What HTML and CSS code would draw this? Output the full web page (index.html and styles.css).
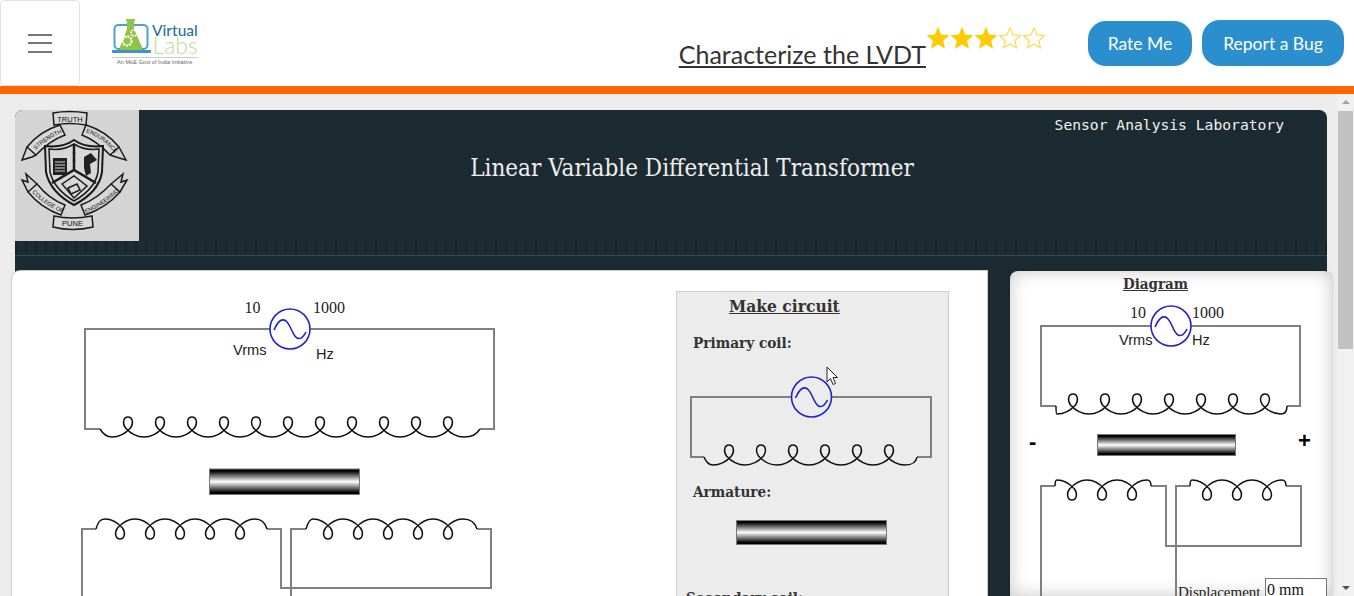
FILE: index.html
```html
<!DOCTYPE html>
<html lang="en">
<head>
    <meta charset="UTF-8">
    <meta name="viewport" content="width=device-width, initial-scale=1.0">
    <title>Characterize the LVDT</title>
    <link rel="stylesheet" href="styles.css">
</head>
<body>
    <!-- Shared shapes for the circuit drawings -->
    <svg class="defs" aria-hidden="true">
        <defs>
            <path id="loopUp" d="M0,0 C8,0 14,-4 18.5,-9 C22,-14 20.5,-20 16,-20 C11.5,-20 10,-14 13.5,-9 C18,-4 24,0 32,0"/>
            <path id="loopDown" d="M0,0 C7,0 13,4 17.5,9 C21,14 19.5,20 15,20 C10.5,20 9,14 12.5,9 C17,4 23,0 30,0"/>
            <g id="source">
                <circle cx="0" cy="0" r="20"/>
                <path d="M-16,1 C-12,-8 -8,-11 -4,-8 C1,-4 2,6 7,9 C11,11 14,7 16,3"/>
            </g>
            <linearGradient id="barFill" x1="0" y1="0" x2="0" y2="1">
                <stop offset="0" stop-color="#000"/>
                <stop offset="0.08" stop-color="#000"/>
                <stop offset="0.5" stop-color="#fff"/>
                <stop offset="0.92" stop-color="#000"/>
                <stop offset="1" stop-color="#000"/>
            </linearGradient>
            <!-- Baselines for the lettering on the crest ribbons -->
            <path id="arcStrength" d="M18,43 Q31,28 52,21"/>
            <path id="arcEndurance" d="M66,21 Q86,25 102,46"/>
            <path id="arcCollege" d="M15,80 Q28,95 50,104"/>
            <path id="arcEngineering" d="M66,105 Q88,98 108,77"/>
        </defs>
    </svg>

    <!-- Top bar -->
    <header class="topbar">
        <button class="menu-btn" aria-label="Menu">
            <span></span>
            <span></span>
            <span></span>
        </button>

        <svg class="logo" viewBox="112 18 86 48" role="img" aria-label="Virtual Labs">
            <rect x="114.5" y="25" width="33" height="24" rx="4" fill="none" stroke="#4ba3d3" stroke-width="2"/>
            <path d="M112,50 H151 V52 Q151,53 150,53 H113 Q112,53 112,52 Z" fill="#3d95c8"/>
            <path d="M126,19 H135 V21 H134 V29 L142,47 Q143,50 141,50 H121 Q119,50 120,47 L127,29 V21 H126 Z" fill="#8fc444"/>
            <circle cx="127" cy="41" r="4.5" fill="none" stroke="#fff" stroke-width="2.4" stroke-dasharray="2 1"/>
            <circle cx="134" cy="33" r="3" fill="none" stroke="#fff" stroke-width="1.8" stroke-dasharray="1.5 .8"/>
            <text class="logo-virtual" x="152" y="36">Virtual</text>
            <text class="logo-labs" x="152.5" y="54">Labs</text>
            <line x1="112" y1="57.5" x2="198" y2="57.5" stroke="#ccc"/>
            <text class="logo-tag" x="117" y="64">An MoE Govt of India Initiative</text>
        </svg>

        <div class="top-right">
            <h1 class="exp-title">Characterize the LVDT</h1>
            <div class="stars">
                <svg viewBox="0 0 24 24"><path class="star-on" d="M12,1 L15.2,8.6 L23.4,9.3 L17.2,14.7 L19.1,22.8 L12,18.5 L4.9,22.8 L6.8,14.7 L.6,9.3 L8.8,8.6 Z"/></svg>
                <svg viewBox="0 0 24 24"><path class="star-on" d="M12,1 L15.2,8.6 L23.4,9.3 L17.2,14.7 L19.1,22.8 L12,18.5 L4.9,22.8 L6.8,14.7 L.6,9.3 L8.8,8.6 Z"/></svg>
                <svg viewBox="0 0 24 24"><path class="star-on" d="M12,1 L15.2,8.6 L23.4,9.3 L17.2,14.7 L19.1,22.8 L12,18.5 L4.9,22.8 L6.8,14.7 L.6,9.3 L8.8,8.6 Z"/></svg>
                <svg viewBox="0 0 24 24"><path class="star-off" d="M12,2 L15,8.9 L22.4,9.6 L16.8,14.5 L18.5,21.8 L12,18 L5.5,21.8 L7.2,14.5 L1.6,9.6 L9,8.9 Z"/></svg>
                <svg viewBox="0 0 24 24"><path class="star-off" d="M12,2 L15,8.9 L22.4,9.6 L16.8,14.5 L18.5,21.8 L12,18 L5.5,21.8 L7.2,14.5 L1.6,9.6 L9,8.9 Z"/></svg>
            </div>
            <div class="top-buttons">
                <button class="pill-btn pill-rate">Rate Me</button>
                <button class="pill-btn pill-bug">Report a Bug</button>
            </div>
        </div>
    </header>

    <div class="page">
        <main class="content">
            <section class="sheet">
                <div class="sheet-head">
                    <!-- College crest -->
                    <div class="crest">
                        <svg viewBox="0 0 124 131" role="img" aria-label="College of Engineering Pune crest">
                            <g class="crest-lines">
                                <path d="M12,37 L7,50 L17,47 L21,45 M104,37 L111,50 L101,47 L95,45"/>
                                <path d="M13,82 L7,70 L13,72 L11,64 L22,74 M105,82 L112,70 L106,72 L108,64 L96,74"/>
                                <path class="banner" d="M38,3 Q54,0 72,3 L71,15 Q54,12 39,15 Z"/>
                                <path class="banner" d="M12,37 Q25,21 45,15 L50,25 Q34,31 21,45 Z"/>
                                <path class="banner" d="M71,15 Q91,21 104,37 L95,45 Q82,31 67,25 Z"/>
                                <path class="banner" d="M13,82 Q26,98 46,105 L50,95 Q34,89 22,74 Z"/>
                                <path class="banner" d="M105,82 Q91,98 70,105 L66,95 Q82,89 96,74 Z"/>
                                <path class="banner" d="M39,106 Q57,110 77,106 L78,117 Q57,122 38,117 Z"/>
                                <path class="shield" d="M30,36 Q48,38 59,30 Q70,38 88,36 L87,62 Q84,82 59,95 Q35,82 31,62 Z"/>
                                <path d="M34,39 Q48,41 59,34 Q70,41 84,39 L83,62 Q80,79 59,91 Q39,79 35,62 Z"/>
                                <path class="chevron" d="M59,34 V60 M37,73 L59,60 L81,73"/>
                                <path d="M47,74 L59,66 L72,76 L59,88 Z"/>
                                <path d="M53,78 L62,74 L65,80 L56,84 Z"/>
                            </g>
                            <rect x="38" y="48" width="14" height="17" fill="#222"/>
                            <path d="M40,52 H50 M40,55 H50 M40,58 H50 M40,61 H50" stroke="#d4d4d4"/>
                            <path d="M69,47 L76,43 L82,50 L75,54 L76,63 L71,66 L69,58 Z" fill="#222"/>
                            <circle cx="59" cy="43" r="1.4" fill="#222"/>
                            <circle cx="59" cy="51" r="1.4" fill="#222"/>
                            <text class="crest-text" x="55" y="11.5" text-anchor="middle">TRUTH</text>
                            <text class="crest-small"><textPath href="#arcStrength" startOffset="4">STRENGTH</textPath></text>
                            <text class="crest-small"><textPath href="#arcEndurance" startOffset="5">ENDURANCE</textPath></text>
                            <text class="crest-small"><textPath href="#arcCollege" startOffset="3">COLLEGE OF</textPath></text>
                            <text class="crest-small"><textPath href="#arcEngineering" startOffset="5">ENGINEERING</textPath></text>
                            <text class="crest-text" x="57.5" y="116" text-anchor="middle">PUNE</text>
                        </svg>
                    </div>
                    <div class="sheet-titles">
                        <div class="lab-name">Sensor Analysis Laboratory</div>
                        <h2 class="sim-title">Linear Variable Differential Transformer</h2>
                    </div>
                </div>
                <div class="sheet-strip"></div>

                <div class="panels">
                    <!-- Main work area -->
                    <div class="panel-main">
                        <svg class="work-svg" viewBox="12 271 664 325">
                            <text class="val" x="244.5" y="313">10</text>
                            <text class="val" x="313" y="313">1000</text>
                            <path class="wire" d="M100,429 H85 V329 H494 V429 H480"/>
                            <use class="src" href="#source" x="290" y="329"/>
                            <text class="unit" x="233" y="355">Vrms</text>
                            <text class="unit" x="316" y="359">Hz</text>
                            <g class="coil">
                                <path d="M100,429 C103,434 107,437 112,437"/>
                                <use href="#loopUp" x="112" y="437"/>
                                <use href="#loopUp" x="144" y="437"/>
                                <use href="#loopUp" x="176" y="437"/>
                                <use href="#loopUp" x="208" y="437"/>
                                <use href="#loopUp" x="240" y="437"/>
                                <use href="#loopUp" x="272" y="437"/>
                                <use href="#loopUp" x="304" y="437"/>
                                <use href="#loopUp" x="336" y="437"/>
                                <use href="#loopUp" x="368" y="437"/>
                                <use href="#loopUp" x="400" y="437"/>
                                <use href="#loopUp" x="432" y="437"/>
                                <path d="M464,437 C472,437 476,435 480,429"/>
                            </g>
                            <rect class="bar" x="209.5" y="469" width="150" height="25.5"/>
                            <path class="wire" d="M82,596 V529 H96 M267,529 H281 V588 H491 V529 H477 M306,529 H291 V596"/>
                            <g class="coil">
                                <path d="M96,529 C98,522 100,519 105,519"/>
                                <use href="#loopDown" x="105" y="519"/>
                                <use href="#loopDown" x="135" y="519"/>
                                <use href="#loopDown" x="165" y="519"/>
                                <use href="#loopDown" x="195" y="519"/>
                                <use href="#loopDown" x="225" y="519"/>
                                <path d="M255,519 C261,519 265,522 267,529"/>
                                <path d="M306,529 C308,522 310,519 313,519"/>
                                <use href="#loopDown" x="313" y="519"/>
                                <use href="#loopDown" x="343" y="519"/>
                                <use href="#loopDown" x="373" y="519"/>
                                <use href="#loopDown" x="403" y="519"/>
                                <use href="#loopDown" x="433" y="519"/>
                                <path d="M463,519 C471,519 475,522 477,529"/>
                            </g>
                        </svg>

                        <aside class="make-box">
                            <h3 class="make-title">Make circuit</h3>
                            <h4 class="make-label make-pri">Primary coil:</h4>
                            <svg class="make-svg" viewBox="677 368 271 104">
                                <path class="wire" d="M704,457 H691 V397 H931 V457 H917"/>
                                <use class="src" href="#source" x="811.5" y="397"/>
                                <g class="coil">
                                    <path d="M704,457 C706,462 709,465 713,465"/>
                                    <use href="#loopUp" x="713" y="465"/>
                                    <use href="#loopUp" x="745" y="465"/>
                                    <use href="#loopUp" x="777" y="465"/>
                                    <use href="#loopUp" x="809" y="465"/>
                                    <use href="#loopUp" x="841" y="465"/>
                                    <use href="#loopUp" x="873" y="465"/>
                                    <path d="M905,465 C912,465 916,463 917,457"/>
                                </g>
                            </svg>
                            <h4 class="make-label make-arm">Armature:</h4>
                            <svg class="make-bar" viewBox="0 0 151 25">
                                <rect class="bar" x=".5" y=".5" width="150" height="24"/>
                            </svg>
                            <h4 class="make-label make-sec">Secondary coil:</h4>
                        </aside>
                    </div>

                    <!-- Reference diagram -->
                    <div class="panel-side">
                        <h3 class="side-title">Diagram</h3>
                        <svg class="side-svg" viewBox="1010 296 322 300">
                            <text class="val" x="1130" y="318">10</text>
                            <text class="val" x="1192" y="318">1000</text>
                            <path class="wire" d="M1056,406 H1041 V326 H1300 V406 H1287"/>
                            <use class="src" href="#source" x="1171" y="326"/>
                            <text class="unit" x="1119" y="345">Vrms</text>
                            <text class="unit" x="1192" y="345">Hz</text>
                            <g class="coil">
                                <path d="M1056,406 Q1056,414 1057,414"/>
                                <use href="#loopUp" x="1057" y="414"/>
                                <use href="#loopUp" x="1089" y="414"/>
                                <use href="#loopUp" x="1121" y="414"/>
                                <use href="#loopUp" x="1153" y="414"/>
                                <use href="#loopUp" x="1185" y="414"/>
                                <use href="#loopUp" x="1217" y="414"/>
                                <use href="#loopUp" x="1249" y="414"/>
                                <path d="M1281,414 C1285,414 1287,411 1287,406"/>
                            </g>
                            <text class="sign" x="1029" y="449">-</text>
                            <text class="sign" x="1298" y="448">+</text>
                            <rect class="bar" x="1097.5" y="434.5" width="138" height="21"/>
                            <path class="wire" d="M1041,596 V486 H1055 M1151,486 H1166 V546 H1301 V486 H1286 M1190,486 H1176 V596"/>
                            <g class="coil">
                                <path d="M1055,486 C1055,481 1056,480 1057,480"/>
                                <use href="#loopDown" x="1057" y="480"/>
                                <use href="#loopDown" x="1087" y="480"/>
                                <use href="#loopDown" x="1117" y="480"/>
                                <path d="M1147,480 C1150,480 1151,482 1151,486"/>
                                <path d="M1190,486 C1190,481 1191,480 1192,480"/>
                                <use href="#loopDown" x="1192" y="480"/>
                                <use href="#loopDown" x="1222" y="480"/>
                                <use href="#loopDown" x="1252" y="480"/>
                                <path d="M1282,480 C1285,480 1286,482 1286,486"/>
                            </g>
                            <text class="disp" x="1178" y="597">Displacement</text>
                        </svg>
                        <input class="disp-input" type="text" value="0 mm">
                    </div>
                </div>
            </section>
        </main>

        <!-- Browser scrollbar -->
        <div class="scrollbar">
            <div class="scroll-up"></div>
            <div class="scroll-thumb"></div>
            <div class="scroll-track"></div>
            <div class="scroll-down"></div>
        </div>
    </div>

    <!-- Mouse pointer caught in the screenshot -->
    <svg class="pointer" viewBox="0 0 13 20">
        <path d="M1,1 V16 L4.5,12.5 L7,18.5 L9.5,17.5 L7,11.5 L11.5,11.5 Z" fill="#fff" stroke="#222" stroke-width="1"/>
    </svg>
</body>
</html>
```
FILE: styles.css
```css
* {
    box-sizing: border-box;
}

html, body {
    height: 100%;
}

body {
    margin: 0;
    overflow: hidden;
    display: flex;
    flex-direction: column;
    position: relative;
    background: #ececec;
    font-family: "Liberation Sans", sans-serif;
}

.defs {
    position: absolute;
    width: 0;
    height: 0;
}

/* Top bar */
.topbar {
    display: flex;
    align-items: stretch;
    flex: none;
    height: 94px;
    background: #fff;
    border-bottom: 8px solid #ff6600;
}

.menu-btn {
    width: 80px;
    display: flex;
    flex-direction: column;
    justify-content: center;
    align-items: center;
    gap: 6.5px;
    background: #fff;
    border: 1px solid #e2e2e2;
    border-radius: 4px;
    padding: 0;
}

.menu-btn span {
    display: block;
    width: 24px;
    height: 2px;
    background: #777;
}

.logo {
    width: 86px;
    height: 48px;
    margin: 18px 0 0 32px;
}

.logo-virtual {
    font: 500 15.5px "Lato", sans-serif;
    fill: #2b6f9e;
}

.logo-labs {
    font: 300 23px "Lato", sans-serif;
    fill: #bcdc94;
}

.logo-tag {
    font: 5.6px "Liberation Sans", sans-serif;
    fill: #666;
}

.top-right {
    margin-left: auto;
    display: flex;
    align-items: flex-start;
}

.exp-title {
    margin: 39px 0 0 0;
    font: 400 25px/30px "Lato", sans-serif;
    color: #333;
    text-decoration: underline;
}

.stars {
    display: flex;
    margin-top: 26px;
    width: 120px;
}

.stars svg {
    width: 24px;
    height: 24px;
}

.star-on {
    fill: #ffcc00;
}

.star-off {
    fill: #fff;
    stroke: #ffd84d;
    stroke-width: 1.2;
}

.top-buttons {
    display: flex;
    gap: 10px;
    margin: 20px 10px 0 42px;
}

.pill-btn {
    padding: 0;
    border: none;
    border-radius: 18px;
    background: #2a8fcc;
    color: #fff;
    font: 400 17.5px "Lato", sans-serif;
}

.pill-rate {
    width: 104px;
    height: 45px;
    margin-top: 1px;
}

.pill-bug {
    width: 142px;
    height: 46px;
}

/* Page under the bar */
.page {
    flex: 1;
    display: flex;
    min-height: 0;
}

.content {
    flex: 1;
    min-width: 0;
    padding: 16px 0 0 15px;
    background: #ececec;
}

.sheet {
    width: 1312px;
    height: 100%;
    background: #1c2a31;
    border-radius: 8px 8px 0 0;
}

.sheet-head {
    display: flex;
    height: 131px;
}

.crest {
    width: 124px;
    height: 131px;
    flex: none;
    background: #d4d4d4;
    border-radius: 8px 0 0 0;
}

.crest svg {
    display: block;
    width: 124px;
    height: 131px;
}

.crest-lines path {
    fill: none;
    stroke: #1a1a1a;
    stroke-width: 1.5;
}

.crest-lines .banner,
.crest-lines .shield {
    fill: #d8d8d8;
}

.crest-lines .shield {
    stroke-width: 2;
}

.crest-lines .chevron {
    stroke-width: 2.5;
}

.crest-text {
    font: 7.5px "Liberation Sans", sans-serif;
    fill: #111;
}

.crest-small {
    font: 5.8px "Liberation Sans", sans-serif;
    fill: #111;
}

.sheet-titles {
    flex: 1;
    display: flex;
    flex-direction: column;
}

.lab-name {
    margin-top: 6px;
    padding-right: 43px;
    text-align: right;
    font: 14.67px/17px "DejaVu Sans Mono", monospace;
    color: #f2f2f2;
}

.sim-title {
    margin: 19px 82px 0 0;
    text-align: center;
    font: 400 24px/32px "DejaVu Serif Condensed", "DejaVu Serif", serif;
    color: #eee;
}

.sheet-strip {
    height: 15px;
    border-bottom: 1px solid #3a464c;
    background: repeating-linear-gradient(90deg, #17242a 0, #17242a 2px, #1e2c33 2px, #1e2c33 10px);
}

.panels {
    display: flex;
    width: 1320px;
    gap: 23px;
    margin: 15px 0 0 -3px;
}

.panel-main {
    flex: none;
    width: 975px;
    height: 325px;
    display: flex;
    background: #fff;
    border-radius: 8px 0 0 0;
    box-shadow: 0 0 0 1px #ccc;
}

.work-svg {
    width: 664px;
    height: 325px;
    flex: none;
}

/* Circuit drawing parts */
.wire {
    fill: none;
    stroke: #808080;
    stroke-width: 2;
}

.coil {
    fill: none;
    stroke: #111;
    stroke-width: 1.5;
}

.src {
    fill: #fff;
    stroke: #2222cc;
    stroke-width: 1.6;
}

.make-box .src {
    fill: #ececec;
}

.bar {
    fill: url(#barFill);
    stroke: #777;
    stroke-width: 1;
}

.val {
    font: 16px "Liberation Serif", serif;
    fill: #222;
}

.unit {
    font: 14.6px "Liberation Sans", sans-serif;
    fill: #222;
}

.sign {
    font: 700 22px "Liberation Sans", sans-serif;
    fill: #000;
}

.disp {
    font: 15px "Liberation Serif", serif;
    fill: #222;
}

/* Make circuit box */
.make-box {
    width: 273px;
    height: 340px;
    margin-top: 20px;
    background: #ececec;
    border: 1px solid #ccc;
    color: #333;
    font-family: "DejaVu Serif Condensed", "DejaVu Serif", serif;
}

.make-title {
    margin: 1px 0 0 52px;
    font-size: 17.3px;
    line-height: 26px;
    font-weight: 700;
    text-decoration: underline;
}

.make-label {
    margin: 0 0 0 16px;
    font-size: 15.2px;
    line-height: 20px;
    font-weight: 700;
}

.make-pri {
    margin-top: 14px;
}

.make-svg {
    display: block;
    width: 271px;
    height: 104px;
    margin-top: 15px;
}

.make-arm {
    margin-top: 10px;
}

.make-bar {
    display: block;
    width: 151px;
    height: 25px;
    margin: 18px 0 0 59px;
}

.make-sec {
    margin: 43px 0 0 9px;
}

/* Diagram side panel */
.panel-side {
    position: relative;
    flex: none;
    width: 322px;
    height: 325px;
    background: #fff;
    border-radius: 8px 8px 0 0;
    box-shadow: inset 0 0 18px rgba(0, 0, 0, 0.22), 0 0 3px rgba(0, 0, 0, 0.2);
}

.side-title {
    height: 25px;
    margin: 0;
    padding-top: 1px;
    text-align: center;
    padding-right: 31px;
    font: 700 15px/24px "DejaVu Serif Condensed", "DejaVu Serif", serif;
    color: #333;
    text-decoration: underline;
}

.side-svg {
    display: block;
    width: 322px;
    height: 300px;
}

.disp-input {
    position: absolute;
    left: 255px;
    top: 307px;
    width: 62px;
    height: 24px;
    padding: 0 1px;
    border: 1px solid #777;
    background: #fff;
    font: 16px "Liberation Serif", serif;
    color: #111;
}

/* Scrollbar */
.scrollbar {
    flex: none;
    width: 17px;
    display: flex;
    flex-direction: column;
    align-items: center;
    background: #f1f1f1;
    position: relative;
}

.scroll-up,
.scroll-down {
    flex: none;
    width: 0;
    height: 0;
    border-left: 4px solid transparent;
    border-right: 4px solid transparent;
}

.scroll-up {
    margin: 6px 0 7px;
    border-bottom: 4px solid #a3a3a3;
}

.scroll-down {
    margin: 6px 0;
    border-top: 4px solid #505050;
}

.scroll-thumb {
    flex: none;
    width: 15px;
    height: 238px;
    background: #c1c1c1;
}

.scroll-track {
    flex: 1;
}

.pointer {
    position: absolute;
    left: 826px;
    top: 366px;
    width: 13px;
    height: 20px;
}
```
